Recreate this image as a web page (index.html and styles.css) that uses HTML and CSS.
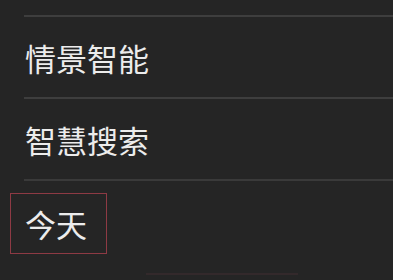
FILE: index.html
```html
<!DOCTYPE html>
<html lang="zh-Hans">
<head>
  <meta charset="UTF-8" />
  <meta name="viewport" content="width=device-width, initial-scale=1.0">
  <title>设置</title>
  <link rel="stylesheet" href="styles.css">
</head>
<body>
  <div class="menu-list">
    <div class="menu-item">情景智能</div>
    <div class="menu-item">智慧搜索</div>
    <div class="menu-item today">
      <span class="mark">今天</span>
    </div>
  </div>
  <div class="bottom-mark"></div>
</body>
</html>
```

FILE: styles.css
```css
body {
  margin: 0;
  background: #252525;
  font-family: "Noto Sans CJK SC", "Noto Sans", sans-serif;
  color: #ececec;
  height: 280px;
  overflow: hidden;
  position: relative;
}
.menu-list {
  padding-top: 15px;
}
.menu-item {
  margin-left: 24px;
  border-top: 2px solid #3e3e3e;
  height: 80px;
  display: flex;
  align-items: center;
  padding-left: 1px;
  font-size: 31px;
  line-height: 1;
}
.menu-item.today {
  border-top-color: #3a3a3a;
  align-items: flex-start;
  padding-top: 12px;
}
.mark {
  display: inline-block;
  margin-left: -15px;
  border: 1px solid #8e3a44;
  padding: 14px 19px 14px 14px;
}
.bottom-mark {
  position: absolute;
  left: 146px;
  top: 273px;
  width: 152px;
  height: 2px;
  background: #33292b;
}
```
